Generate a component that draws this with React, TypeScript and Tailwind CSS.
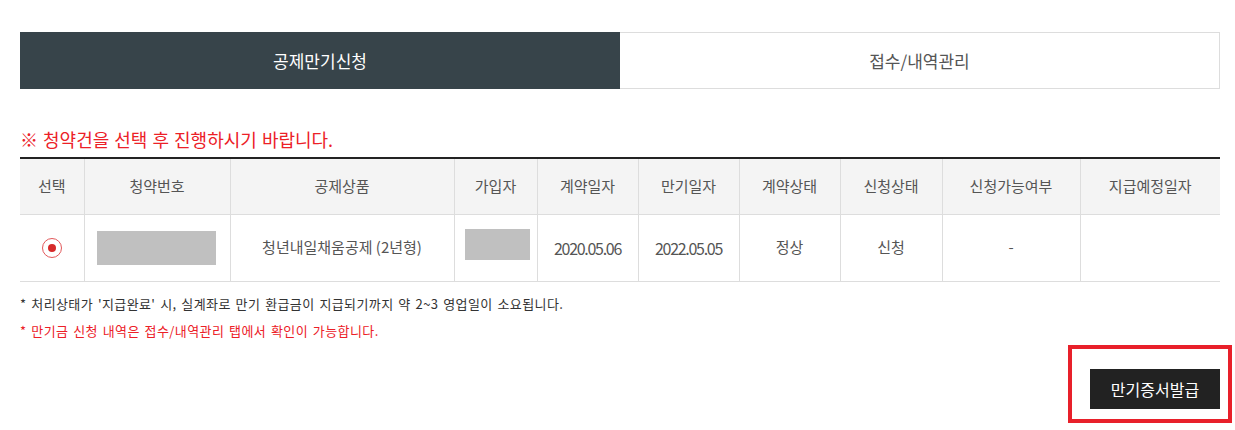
import React from "react";

const columns = [
  { label: "선택", w: "w-[64px]" },
  { label: "청약번호", w: "w-[146px]" },
  { label: "공제상품", w: "w-[224px]" },
  { label: "가입자", w: "w-[83px]" },
  { label: "계약일자", w: "w-[101px]" },
  { label: "만기일자", w: "w-[101px]" },
  { label: "계약상태", w: "w-[101px]" },
  { label: "신청상태", w: "w-[102px]" },
  { label: "신청가능여부", w: "w-[138px]" },
  { label: "지급예정일자", w: "" },
];

const Radio = () => (
  <span className="inline-flex h-[20px] w-[20px] items-center justify-center rounded-full border border-[#e2585a] bg-white">
    <span className="h-[8px] w-[8px] rounded-full bg-[#d62a2a]" />
  </span>
);

const App = () => {
  return (
    <div
      className="min-h-[430px] w-[1235px] bg-white pt-[32px]"
      style={{ fontFamily: '"Noto Sans CJK KR", "Noto Sans", sans-serif' }}
    >
      <div className="ml-[20px] w-[1200px]">
        {/* tabs */}
        <div className="flex h-[57px]">
          <div className="flex w-[600px] items-center justify-center bg-[#37444a] text-[17px] text-white">
            공제만기신청
          </div>
          <div className="flex flex-1 items-center justify-center border border-l-0 border-[#dddddd] text-[17px] text-[#555555]">
            접수/내역관리
          </div>
        </div>

        <p className="mt-[36px] mb-[4px] text-[18px] leading-[28px] text-[#ec2027] [word-spacing:1px]">
          ※ 청약건을 선택 후 진행하시기 바랍니다.
        </p>

        {/* table */}
        <table className="w-full table-fixed border-collapse border-t-2 border-[#222222] text-[15px] text-[#555555]">
          <colgroup>
            {columns.map((c) => (
              <col key={c.label} className={c.w} />
            ))}
          </colgroup>
          <thead>
            <tr className="h-[56px] bg-[#f4f4f4]">
              {columns.map((c, i) => (
                <th
                  key={c.label}
                  className={`border-b border-[#dddddd] font-normal ${i > 0 ? "border-l" : ""}`}
                >
                  {c.label}
                </th>
              ))}
            </tr>
          </thead>
          <tbody>
            <tr className="h-[67px] border-b border-[#dddddd] text-center">
              <td>
                <div className="flex justify-center">
                  <Radio />
                </div>
              </td>
              <td className="border-l border-[#dddddd]">
                <div className="mx-auto h-[34px] w-[119px] -translate-x-[1px] bg-[#c0c0c0]" />
              </td>
              <td className="border-l border-[#dddddd]">청년내일채움공제 (2년형)</td>
              <td className="border-l border-[#dddddd]">
                <div className="mx-auto h-[31px] w-[65px] translate-x-[2px] -translate-y-[3px] bg-[#c0c0c0]" />
              </td>
              <td className="border-l border-[#dddddd] text-[16px] tracking-[-1.3px]">2020.05.06</td>
              <td className="border-l border-[#dddddd] text-[16px] tracking-[-1.3px]">2022.05.05</td>
              <td className="border-l border-[#dddddd]">정상</td>
              <td className="border-l border-[#dddddd]">신청</td>
              <td className="border-l border-[#dddddd]">-</td>
              <td className="border-l border-[#dddddd]" />
            </tr>
          </tbody>
        </table>

        <div className="pt-[12px] text-[13px] leading-[20px] tracking-[0.4px] [word-spacing:1.5px]">
          <p className="text-[#333333]">
            * 처리상태가 '지급완료' 시, 실계좌로 만기 환급금이 지급되기까지 약 2~3 영업일이 소요됩니다.
          </p>
          <p className="mt-[7px] text-[#ec2027]">* 만기금 신청 내역은 접수/내역관리 탭에서 확인이 가능합니다.</p>
        </div>

        <div className="mt-[4px] -mr-[12px] flex justify-end">
          <div className="border-4 border-[#e8202a] pt-[20px] pr-[8px] pb-[10px] pl-[18px]">
            <button className="flex h-[40px] w-[130px] items-center justify-center bg-[#222222] text-[16px] text-white">
              만기증서발급
            </button>
          </div>
        </div>
      </div>
    </div>
  );
};

export default App;
